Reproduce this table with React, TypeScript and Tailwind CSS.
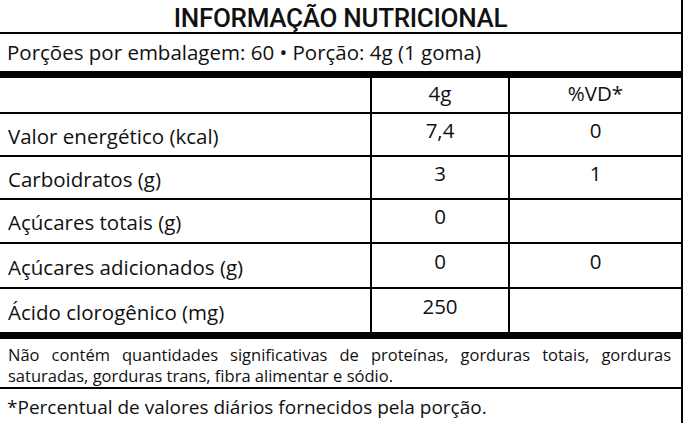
import React from "react";

const rows: { label: string; v: string; vd: string; h: string }[] = [
  { label: "Valor energético (kcal)", v: "7,4", vd: "0", h: "h-[41px]" },
  { label: "Carboidratos (g)", v: "3", vd: "1", h: "h-[41px]" },
  { label: "Açúcares totais (g)", v: "0", vd: "", h: "h-[42px]" },
  { label: "Açúcares adicionados (g)", v: "0", vd: "0", h: "h-[43px]" },
  { label: "Ácido clorogênico (mg)", v: "250", vd: "", h: "h-[43px]" },
];

export default function App() {
  return (
    <div className="w-[683px] h-[425px] bg-white text-[#111] overflow-hidden font-['Open_Sans',sans-serif]">
      <div className="w-[683px] border-r-2 border-black flex flex-col">
        <div className="h-[34px] border-b-2 border-black flex items-center justify-center pt-[3px]">
          <span className="font-['Roboto',sans-serif] text-[26px] font-medium tracking-[-0.3px] leading-none">INFORMAÇÃO NUTRICIONAL</span>
        </div>
        <div className="h-[44px] border-b-[7px] border-black flex items-center pl-[7px] pb-[1px]">
          <span className="text-[20.5px] leading-none">Porções por embalagem: 60 • Porção: 4g (1 goma)</span>
        </div>
        <div className="h-[36px] border-b-2 border-black flex">
          <div className="w-[372px] border-r-2 border-black" />
          <div className="w-[138px] border-r-2 border-black flex items-center justify-center pb-[3px] text-[20.5px]">4g</div>
          <div className="flex-1 flex items-center justify-center pb-[3px] text-[20.5px]">%VD*</div>
        </div>
        {rows.map((r, i) => (
          <div
            key={r.label}
            className={`${r.h} ${i === rows.length - 1 ? "border-b-[7px]" : "border-b-2"} box-content border-black flex`}
          >
            <div className="w-[372px] border-r-2 border-black flex items-center pl-[8px] pt-[3px] text-[20.5px]">{r.label}</div>
            <div className="w-[138px] border-r-2 border-black flex items-center justify-center pb-[9px] text-[20.5px]">{r.v}</div>
            <div className="flex-1 flex items-center justify-center pb-[9px] text-[20.5px]">{r.vd}</div>
          </div>
        ))}
        <div className="h-[50px] border-b-2 border-black pl-[8px] pr-[10px] pt-[5px]">
          <p className="text-[16.5px] leading-[21px] text-justify">
            Não contém quantidades significativas de proteínas, gorduras totais, gorduras saturadas, gorduras trans, fibra alimentar e sódio.
          </p>
        </div>
        <div className="h-[34px] flex items-center pl-[7px] pt-[2px]">
          <span className="text-[19px] leading-none">*Percentual de valores diários fornecidos pela porção.</span>
        </div>
      </div>
    </div>
  );
}
